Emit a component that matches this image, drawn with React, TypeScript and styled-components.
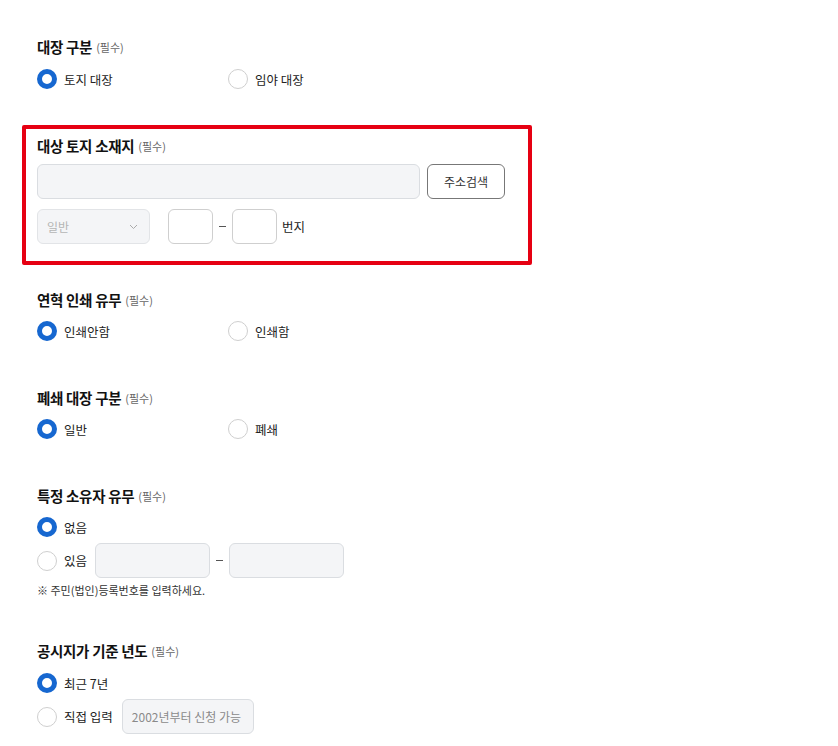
import React, { FC } from "react";
import styled, { createGlobalStyle } from "styled-components";

const GlobalStyle = createGlobalStyle`
  body {
    margin: 0;
    background: #ffffff;
    font-family: "Noto Sans CJK KR", "Noto Sans", sans-serif;
    color: #222;
  }
`;

const Page = styled.div`
  padding-top: 37px;
  width: 838px;
  min-height: 746px;
  box-sizing: border-box;
`;

const Section = styled.div<{ $mb: number }>`
  padding-left: 37px;
  margin-bottom: ${p => p.$mb}px;
  display: flex;
  flex-direction: column;
`;

const HighlightBox = styled.div`
  margin-left: 22px;
  margin-bottom: 25px;
  width: 510px;
  box-sizing: border-box;
  border: 4px solid #e60012;
  border-radius: 2px;
  padding: 7px 11px 17px;
  display: flex;
  flex-direction: column;
`;

const Title = styled.div`
  height: 20px;
  line-height: 20px;
  font-size: 14.5px;
  font-weight: 700;
  letter-spacing: -0.3px;
  color: #111;
  display: flex;
  align-items: center;
  gap: 4px;
`;

const Required = styled.span`
  font-size: 11px;
  font-weight: 400;
  color: #666;
  letter-spacing: 0;
`;

const RadioGroup = styled.div<{ $mt: number }>`
  margin-top: ${p => p.$mt}px;
  display: flex;
  flex-direction: column;
  gap: 6px;
`;

const RadioLine = styled.div`
  display: flex;
  align-items: center;
`;

const Option = styled.label<{ $width?: number }>`
  display: flex;
  align-items: center;
  gap: 7px;
  height: 20px;
  width: ${p => (p.$width ? `${p.$width}px` : "auto")};
  font-size: 12.5px;
  color: #222;
  cursor: pointer;
`;

const Mark = styled.span<{ $checked?: boolean }>`
  width: 20px;
  height: 20px;
  box-sizing: border-box;
  border-radius: 50%;
  flex-shrink: 0;
  background: #fff;
  border: ${p => (p.$checked ? "5px solid #1667d0" : "1px solid #cfcfcf")};
`;

const Row = styled.div<{ $mt: number }>`
  margin-top: ${p => p.$mt}px;
  display: flex;
  align-items: center;
`;

const Field = styled.div<{ $width: number; $white?: boolean }>`
  width: ${p => p.$width}px;
  height: 35px;
  box-sizing: border-box;
  border: 1px solid ${p => (p.$white ? "#cfcfcf" : "#dadde1")};
  border-radius: 6px;
  background: ${p => (p.$white ? "#fff" : "#f4f5f7")};
  display: flex;
  align-items: center;
  padding: 0 9px;
  font-size: 12px;
  color: #8a8a8a;
  flex-shrink: 0;
`;

const SearchButton = styled.button`
  margin-left: 7px;
  width: 78px;
  height: 35px;
  box-sizing: border-box;
  border: 1px solid #777;
  border-radius: 6px;
  background: #fff;
  font-family: inherit;
  font-size: 12px;
  color: #333;
  padding: 0;
`;

const Select = styled.div`
  width: 113px;
  height: 35px;
  box-sizing: border-box;
  border: 1px solid #e2e4e7;
  border-radius: 6px;
  background: #f4f5f7;
  display: flex;
  align-items: center;
  justify-content: space-between;
  padding: 0 11px 0 9px;
  font-size: 12px;
  color: #b5b5b5;
`;

const Dash = styled.span<{ $w: number }>`
  width: ${p => p.$w}px;
  display: flex;
  justify-content: center;
  &::before {
    content: "";
    width: 7px;
    height: 1px;
    background: #555;
  }
`;

const Unit = styled.span`
  margin-left: 5px;
  font-size: 12.5px;
  color: #222;
`;

const Note = styled.div`
  margin-top: 5px;
  height: 14px;
  line-height: 14px;
  font-size: 11px;
  color: #333;
`;

const Chevron: FC = () => (
  <svg width="9" height="6" viewBox="0 0 9 6" fill="none">
    <path d="M1 1l3.5 3.5L8 1" stroke="#aaa" strokeWidth="1" />
  </svg>
);

const Heading: FC<{ text: string }> = ({ text }) => (
  <Title>
    {text}
    <Required>(필수)</Required>
  </Title>
);

const App: FC = () => {
  return (
    <Page>
      <GlobalStyle />

      <Section $mb={36}>
        <Heading text="대장 구분" />
        <RadioGroup $mt={12}>
          <RadioLine>
            <Option $width={191}><Mark $checked />토지 대장</Option>
            <Option><Mark />임야 대장</Option>
          </RadioLine>
        </RadioGroup>
      </Section>

      <HighlightBox>
        <Heading text="대상 토지 소재지" />
        <Row $mt={8}>
          <Field $width={383} />
          <SearchButton>주소검색</SearchButton>
        </Row>
        <Row $mt={10}>
          <Select>
            일반
            <Chevron />
          </Select>
          <Field $width={45} $white style={{ marginLeft: 18 }} />
          <Dash $w={19} />
          <Field $width={45} $white />
          <Unit>번지</Unit>
        </Row>
      </HighlightBox>

      <Section $mb={47}>
        <Heading text="연혁 인쇄 유무" />
        <RadioGroup $mt={11}>
          <RadioLine>
            <Option $width={191}><Mark $checked />인쇄안함</Option>
            <Option><Mark />인쇄함</Option>
          </RadioLine>
        </RadioGroup>
      </Section>

      <Section $mb={47}>
        <Heading text="폐쇄 대장 구분" />
        <RadioGroup $mt={11}>
          <RadioLine>
            <Option $width={191}><Mark $checked />일반</Option>
            <Option><Mark />폐쇄</Option>
          </RadioLine>
        </RadioGroup>
      </Section>

      <Section $mb={44}>
        <Heading text="특정 소유자 유무" />
        <RadioGroup $mt={11}>
          <Option><Mark $checked />없음</Option>
          <RadioLine>
            <Option><Mark />있음</Option>
            <Field $width={115} style={{ marginLeft: 8 }} />
            <Dash $w={19} />
            <Field $width={115} />
          </RadioLine>
        </RadioGroup>
        <Note>※ 주민(법인)등록번호를 입력하세요.</Note>
      </Section>

      <Section $mb={0}>
        <Heading text="공시지가 기준 년도" />
        <RadioGroup $mt={12}>
          <Option><Mark $checked />최근 7년</Option>
          <RadioLine>
            <Option><Mark />직접 입력</Option>
            <Field $width={132} style={{ marginLeft: 9 }}>2002년부터 신청 가능</Field>
          </RadioLine>
        </RadioGroup>
      </Section>
    </Page>
  );
};

export default App;
